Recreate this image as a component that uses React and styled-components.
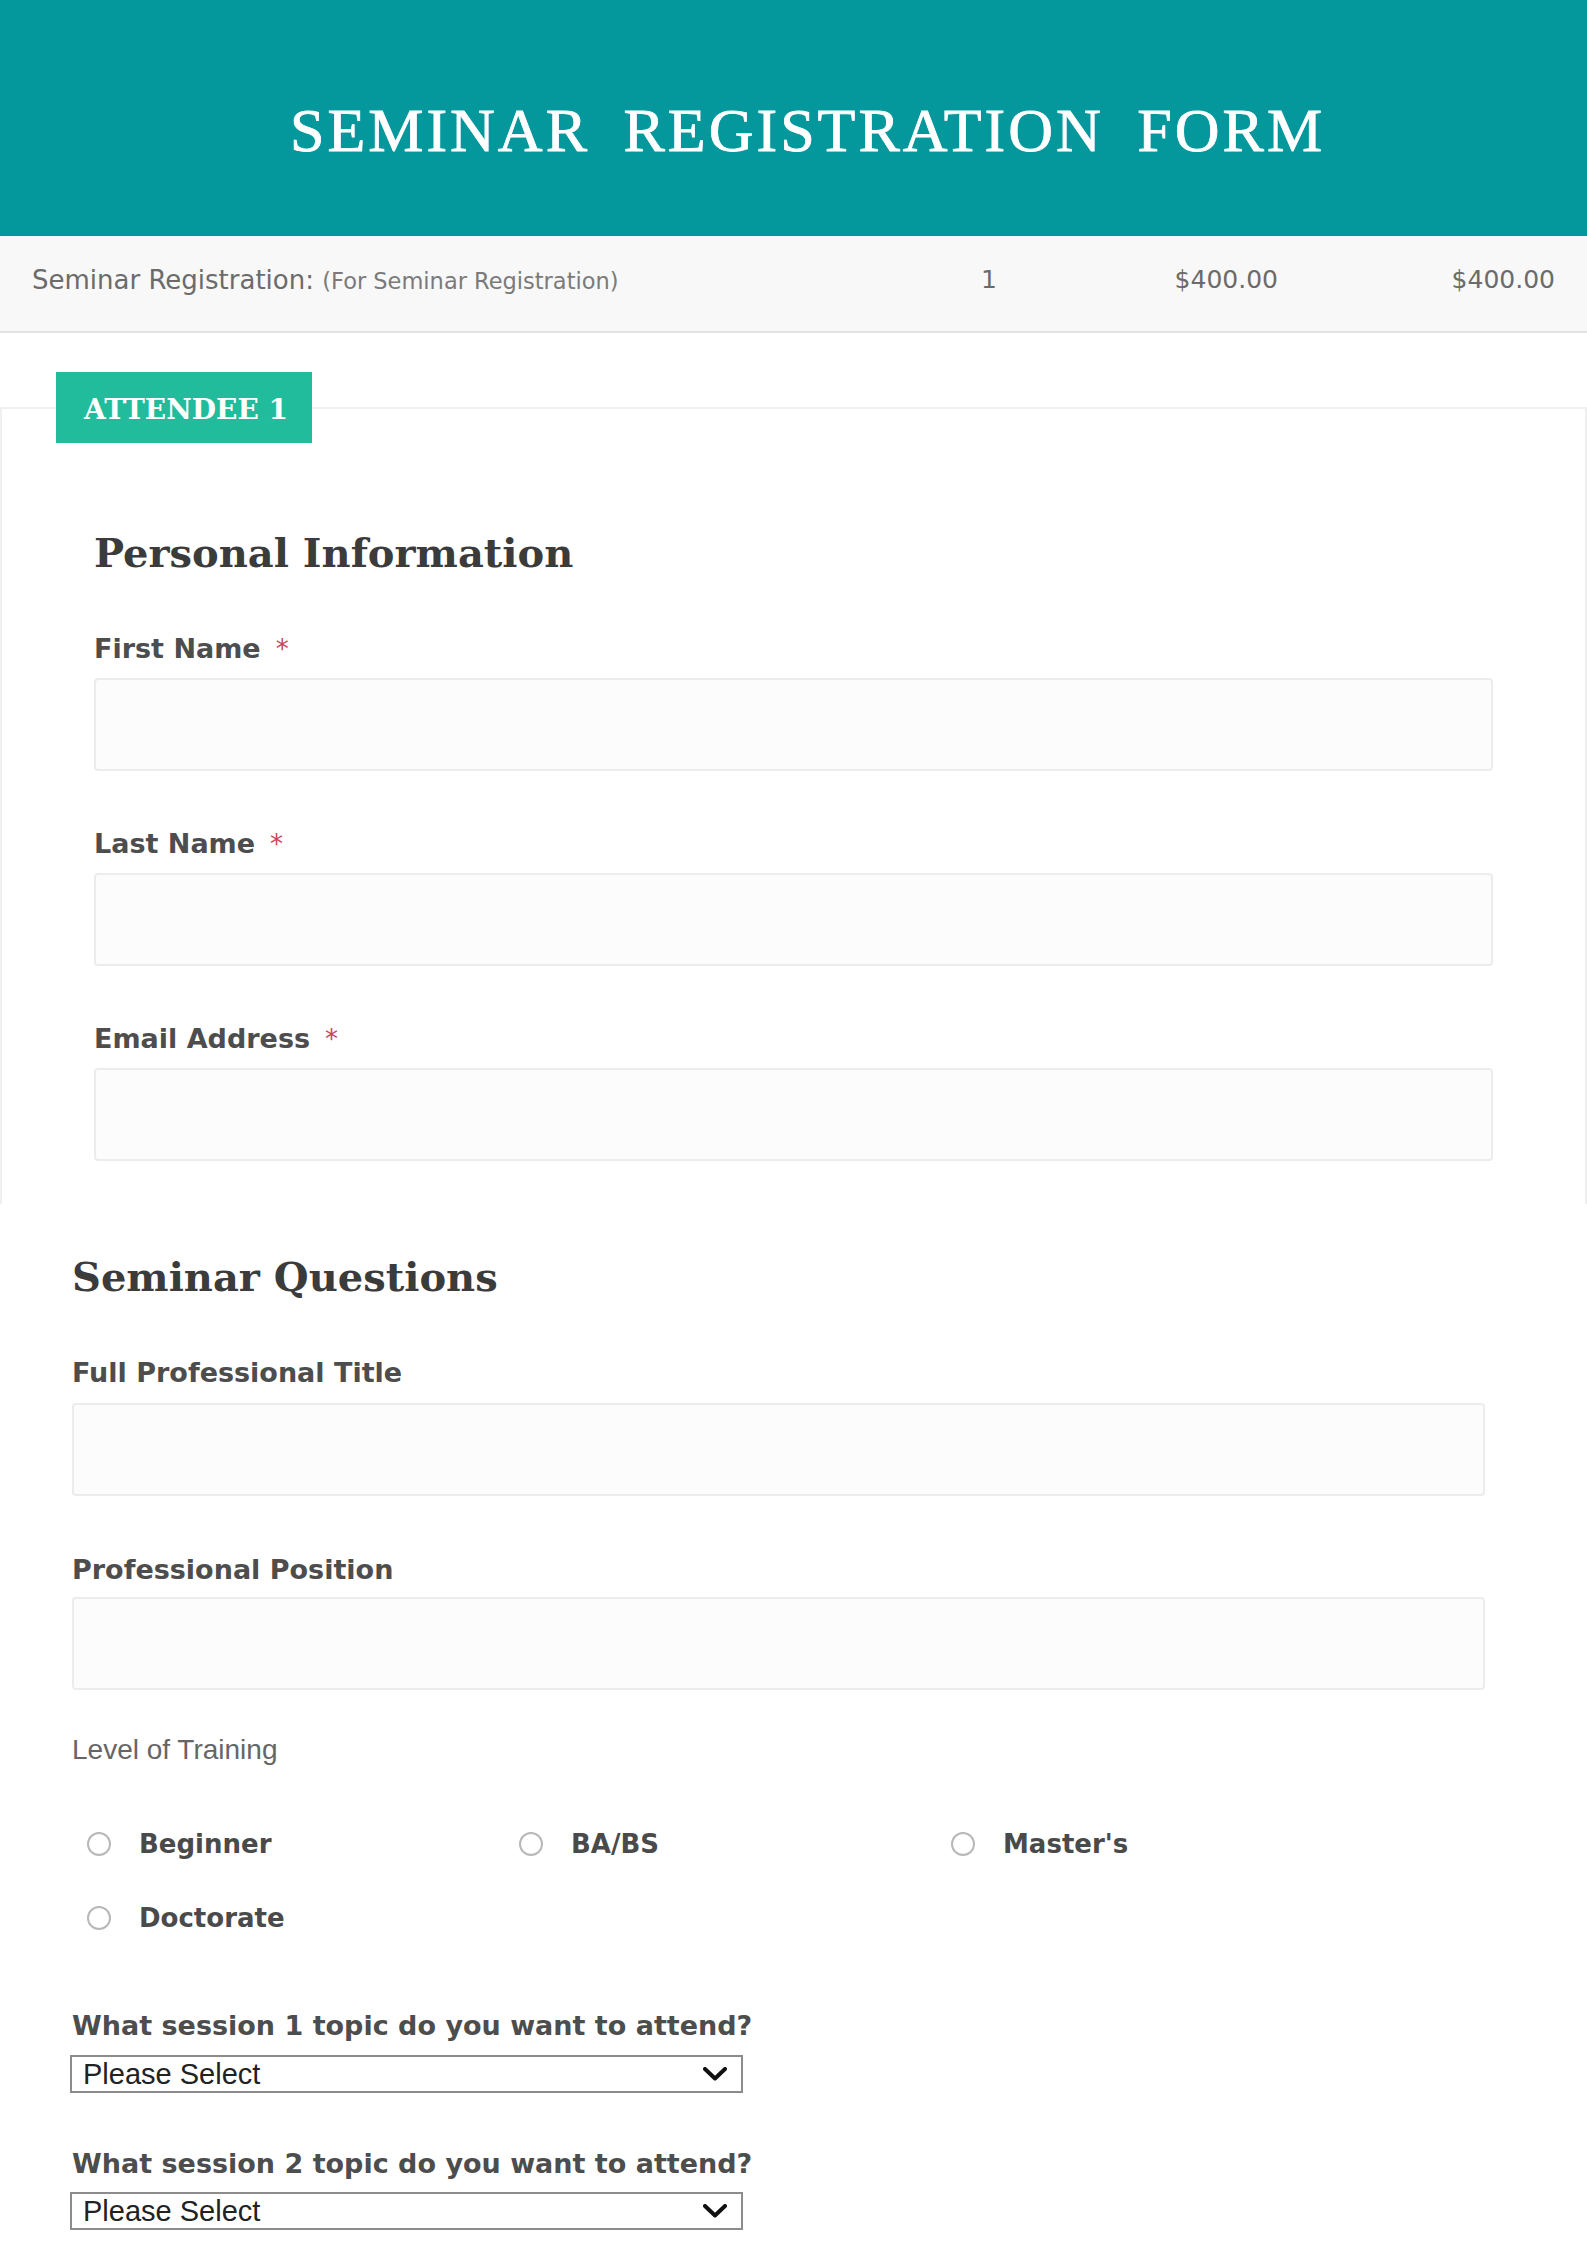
import React from "react";
import styled, { createGlobalStyle } from "styled-components";

const GlobalStyle = createGlobalStyle`
  * {
    box-sizing: border-box;
  }
  body {
    margin: 0;
    background: #fff;
    font-family: "DejaVu Sans", sans-serif;
  }
`;

const Page = styled.div`
  width: 1587px;
  min-height: 2245px;
  background: #fff;
`;

//Banner
const Banner = styled.header`
  height: 236px;
  padding: 99px 0 0 28px;
  background: #04979c;
  text-align: center;
`;

const Title = styled.h1`
  margin: 0;
  font-family: "Liberation Serif", "Times New Roman", serif;
  font-weight: 400;
  font-size: 62px;
  line-height: 62px;
  letter-spacing: 3px;
  word-spacing: 15px;
  color: #fff;
  -webkit-text-stroke: 0.8px #fff;
`;

//Cart line
const CartRow = styled.div`
  display: grid;
  grid-template-columns: 1fr 120px 281px 277px;
  align-items: center;
  height: 97px;
  padding: 0 32px 8px 32px;
  background: #f8f8f8;
  border-bottom: 2px solid #e2e2e2;
  color: #6b6b6b;
  font-size: 25px;
`;

const Item = styled.span`
  white-space: nowrap;
  font-size: 26px;
  small {
    font-size: 22.5px;
    color: #7a7a7a;
  }
`;

const Amount = styled.span`
  text-align: right;
`;

//Attendee fieldset
const Attendee = styled.fieldset`
  min-width: 0;
  margin: 39px 0 0;
  padding: 0;
  border: 2px solid #efefef;
  border-bottom: none;
`;

const Badge = styled.legend`
  width: 256px;
  height: 71px;
  margin-left: 54px;
  padding: 0 0 0 28px;
  overflow: hidden;
  background: #20bc9c;
  color: #fff;
  font-family: "DejaVu Serif", serif;
  font-weight: 700;
  font-size: 28px;
  line-height: 76px;
  white-space: nowrap;
`;

const FormBody = styled.div`
  display: flex;
  flex-direction: column;
  gap: 59px;
  padding: 90px 92px 43px 92px;
`;

const Heading = styled.h2`
  margin: 0 0 3px;
  font-family: "DejaVu Serif", serif;
  font-weight: 700;
  font-size: 40px;
  line-height: 40px;
  color: #3b3b3b;
`;

const Field = styled.div`
  display: flex;
  flex-direction: column;
  gap: ${(p) => p.$gap ?? 15}px;
  margin-top: ${(p) => p.$top ?? 0}px;
`;

const Label = styled.label`
  font-family: "DejaVu Sans", sans-serif;
  font-weight: 700;
  font-size: 27px;
  line-height: 27px;
  color: #4d4d4d;
  white-space: nowrap;
`;

const Required = styled.span`
  margin-left: 15px;
  font-weight: 400;
  font-size: 26px;
  color: #c8455b;
`;

const TextInput = styled.input`
  display: block;
  width: 100%;
  height: 93px;
  border: 2px solid #ececec;
  border-radius: 4px;
  background: #fcfcfc;
  outline: none;
`;

//Seminar questions
const Questions = styled.section`
  display: flex;
  flex-direction: column;
  padding: 53px 102px 18px 72px;
`;

const PlainLabel = styled.div`
  font-family: "Liberation Sans", Arial, sans-serif;
  font-size: 28px;
  line-height: 28px;
  color: #666;
`;

const RadioGrid = styled.div`
  display: grid;
  grid-template-columns: repeat(3, 432px);
  row-gap: 34px;
  margin-top: 60px;
  padding-left: 15px;
`;

const RadioItem = styled.label`
  display: flex;
  align-items: center;
  gap: 28px;
  height: 40px;
  font-weight: 700;
  font-size: 26px;
  color: #4a4a4a;
`;

const RadioDot = styled.span`
  width: 24px;
  height: 24px;
  border: 2px solid #b8b8b8;
  border-radius: 50%;
  background: #fff;
  flex: none;
`;

const SelectBox = styled.div`
  display: flex;
  align-items: center;
  justify-content: space-between;
  width: 673px;
  height: 38px;
  margin-left: -2px;
  padding: 0 14px 0 11px;
  border: 2px solid #8c8c8c;
  background: #fff;
  font-family: "Liberation Sans", Arial, sans-serif;
  font-size: 29px;
  color: #222;
`;

const Chevron = () => (
  <svg width="24" height="14" viewBox="0 0 24 14" fill="none">
    <path d="M2 2 L12 11.5 L22 2" stroke="#111" strokeWidth="4" strokeLinecap="round" strokeLinejoin="round" />
  </svg>
);

const personal = ["First Name", "Last Name", "Email Address"];
const levels = ["Beginner", "BA/BS", "Master's", "Doctorate"];

const App = () => {
  return (
    <Page>
      <GlobalStyle />
      <Banner>
        <Title>SEMINAR REGISTRATION FORM</Title>
      </Banner>

      <CartRow>
        <Item>
          Seminar Registration: <small>(For Seminar Registration)</small>
        </Item>
        <Amount>1</Amount>
        <Amount>$400.00</Amount>
        <Amount>$400.00</Amount>
      </CartRow>

      <Attendee>
        <Badge>ATTENDEE 1</Badge>
        <FormBody>
          <Heading>Personal Information</Heading>
          {personal.map((name) => (
            <Field key={name}>
              <Label>
                {name}
                <Required>*</Required>
              </Label>
              <TextInput type="text" />
            </Field>
          ))}
        </FormBody>
      </Attendee>

      <Questions>
        <Heading>Seminar Questions</Heading>
        <Field $top={59} $gap={17}>
          <Label>Full Professional Title</Label>
          <TextInput type="text" />
        </Field>
        <Field $top={60} $gap={14}>
          <Label>Professional Position</Label>
          <TextInput type="text" />
        </Field>
        <Field $top={46} $gap={0}>
          <PlainLabel>Level of Training</PlainLabel>
          <RadioGrid>
            {levels.map((level) => (
              <RadioItem key={level}>
                <RadioDot />
                {level}
              </RadioItem>
            ))}
          </RadioGrid>
        </Field>
        <Field $top={74} $gap={16}>
          <Label>What session 1 topic do you want to attend?</Label>
          <SelectBox>
            Please Select
            <Chevron />
          </SelectBox>
        </Field>
        <Field $top={57} $gap={15}>
          <Label>What session 2 topic do you want to attend?</Label>
          <SelectBox>
            Please Select
            <Chevron />
          </SelectBox>
        </Field>
      </Questions>
    </Page>
  );
};

export default App;
